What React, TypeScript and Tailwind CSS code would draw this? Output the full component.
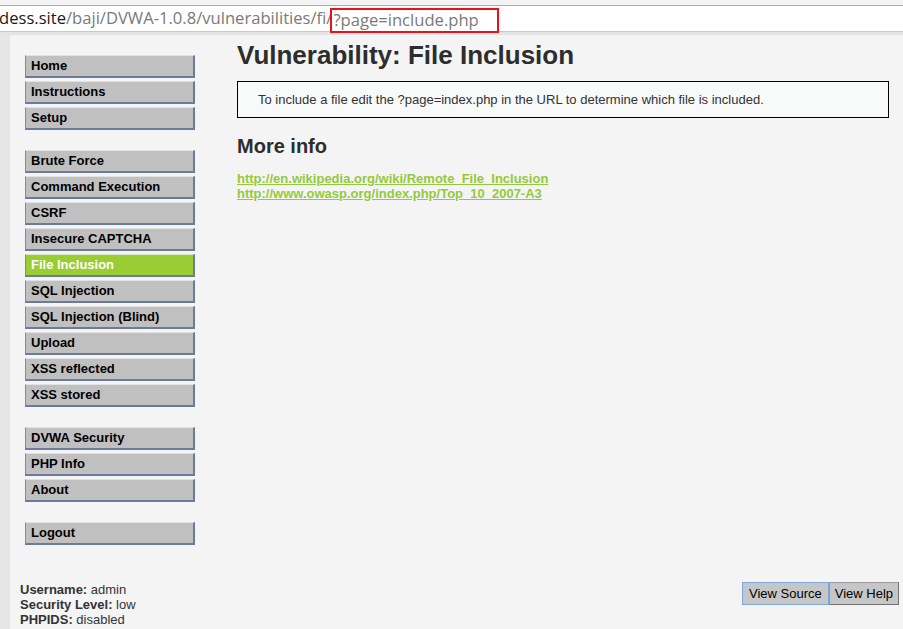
import React from "react";

const groups: string[][] = [
  ["Home", "Instructions", "Setup"],
  [
    "Brute Force",
    "Command Execution",
    "CSRF",
    "Insecure CAPTCHA",
    "File Inclusion",
    "SQL Injection",
    "SQL Injection (Blind)",
    "Upload",
    "XSS reflected",
    "XSS stored",
  ],
  ["DVWA Security", "PHP Info", "About"],
  ["Logout"],
];

function MenuItem({ label }: { label: string }) {
  const selected = label === "File Inclusion";
  return (
    <div
      className={
        selected
          ? "w-[170px] h-[23px] bg-[#9acc34] text-white font-bold text-[13px] leading-[20px] pl-[5px] border-t border-t-[#dce8c4] border-l border-l-[#7d8aa3] border-r-2 border-r-[#6c7b99] border-b-2 border-b-[#6c7b99]"
          : "w-[170px] h-[23px] bg-[#c0c0c0] text-black font-bold text-[13px] leading-[20px] pl-[5px] border-t border-t-[#e2e2e2] border-l border-l-[#7d8aa3] border-r-2 border-r-[#6c7b99] border-b-2 border-b-[#6c7b99]"
      }
    >
      {label}
    </div>
  );
}

export default function App() {
  return (
    <div
      className="w-[903px] h-[629px] flex flex-col overflow-hidden bg-[#f4f4f4]"
      style={{ fontFamily: '"Liberation Sans", Arial, sans-serif' }}
    >
      {/* URL bar */}
      <div className="h-[5px] bg-[#f3f3f3]" />
      <div className="h-px bg-[#adadad]" />
      <div
        className="h-[25px] bg-white flex items-center whitespace-nowrap text-[16.6px] text-[#7a7a7a] overflow-visible relative z-10"
        style={{ fontFamily: '"Open Sans", "Noto Sans", sans-serif' }}
      >
        <span className="ml-[-1px] text-[#1a1a1a]">dess.site</span>
        <span>/baji/DVWA-1.0.8/vulnerabilities/fi/</span>
        <span className="inline-flex items-center h-[25px] w-[169px] mt-[3px] ml-[-2px] border-2 border-[#e8131a] pl-[1px] leading-[20px]">
          ?page=include.php
        </span>
      </div>
      <div className="h-px bg-[#c9c9c9]" />
      <div className="h-[3px] bg-[#e4e4e4]" />

      {/* Page */}
      <div className="flex-1 flex">
        <div className="w-[10px] bg-[#e6e6e6]" />
        <div className="flex-1 flex flex-col">
          <div className="flex-1 flex">
            {/* Sidebar */}
            <div className="w-[227px] pl-[15px] pt-[20px] flex flex-col gap-[20px]">
              {groups.map((g, i) => (
                <div key={i} className="flex flex-col gap-[3px]">
                  {g.map((l) => (
                    <MenuItem key={l} label={l} />
                  ))}
                </div>
              ))}
            </div>
            {/* Main */}
            <div className="w-[652px] pt-[5px]">
              <h1 className="text-[26px] leading-[30px] font-bold text-[#2d2d2d]">
                Vulnerability: File Inclusion
              </h1>
              <div className="mt-[11px] border border-black bg-[#f8f9f9] pl-[20px] py-[10px] text-[13px] leading-[15px] text-[#333]">
                To include a file edit the ?page=index.php in the URL to determine which file is included.
              </div>
              <h2 className="mt-[16px] text-[20px] leading-[24px] font-bold text-[#2d2d2d]">
                More info
              </h2>
              <div className="mt-[13px] flex flex-col text-[13px] leading-[15px] font-bold text-[#95c93d]">
                <span className="underline">http://en.wikipedia.org/wiki/Remote_File_Inclusion</span>
                <span className="underline">http://www.owasp.org/index.php/Top_10_2007-A3</span>
              </div>
            </div>
          </div>
          {/* Bottom */}
          <div className="flex justify-between items-start pb-[2px] pr-[4px]">
            <div className="pl-[10px] text-[13px] leading-[15px] text-[#333]">
              <div>
                <span className="font-bold">Username:</span> admin
              </div>
              <div>
                <span className="font-bold">Security Level:</span> low
              </div>
              <div>
                <span className="font-bold">PHPIDS:</span> disabled
              </div>
            </div>
            <div className="flex">
              <button className="h-[23px] px-[6px] bg-[#c6c6c6] border border-[#7aa7e8] text-[13px] text-black leading-[20px]">
                View Source
              </button>
              <button className="h-[23px] px-[5px] bg-[#c6c6c6] border border-[#9a9a9a] border-r-[#707070] border-b-[#707070] text-[13px] text-black leading-[20px]">
                View Help
              </button>
            </div>
          </div>
        </div>
      </div>
    </div>
  );
}
